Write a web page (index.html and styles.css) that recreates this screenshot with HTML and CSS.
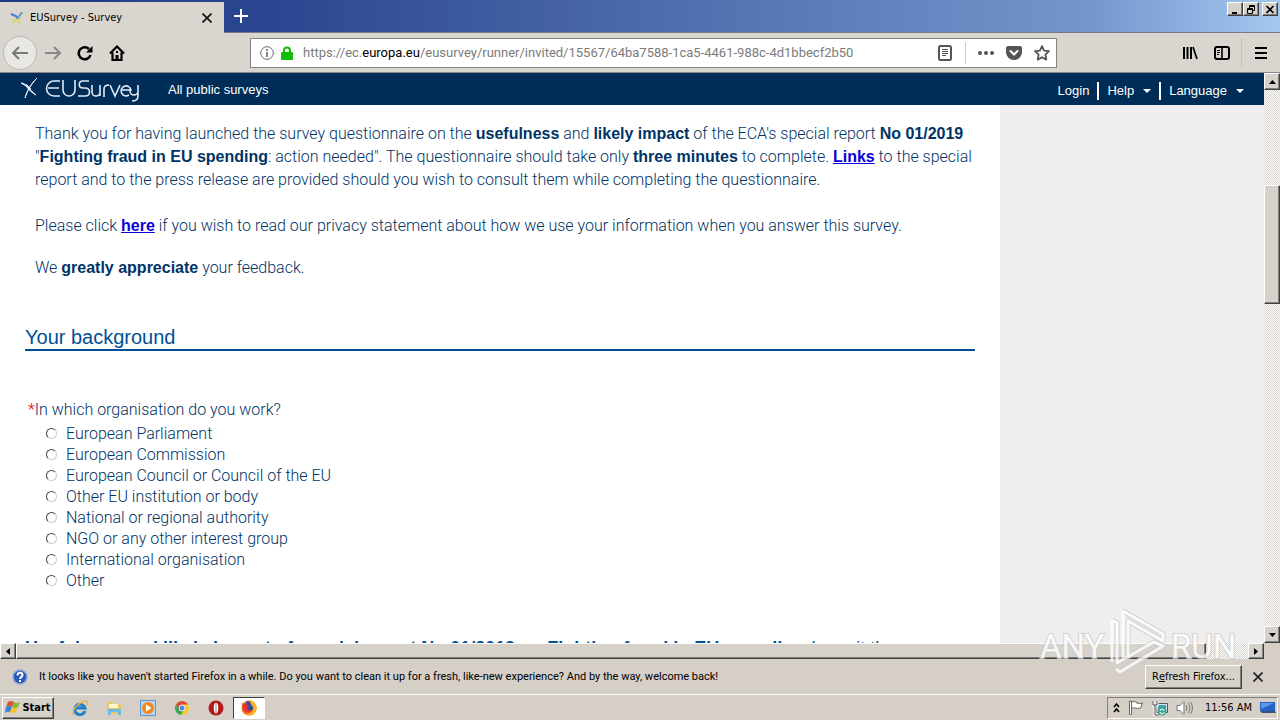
FILE: index.html
```html
<!DOCTYPE html>
<html lang="en">
<head>
  <meta charset="UTF-8">
  <title>EUSurvey - Survey</title>
  <link rel="stylesheet" href="styles.css">
</head>
<body>

<!-- TITLE BAR -->
<header class="titlebar">
  <div class="tab">
    <svg class="tab-icon" width="14" height="14" viewBox="0 0 14 14" fill="none">
      <path d="M1 3l5 2 2 3" stroke="#3f7fc4" stroke-width="2"/>
      <path d="M12 1C9 4 8 6 7 9" stroke="#5b9be0" stroke-width="1.5"/>
      <path d="M13 2C10 4 9 7 8 9" stroke="#79b05c"/>
      <path d="M6 8l-3 4M7 8l3 4" stroke="#e3d64c" stroke-width="2"/>
    </svg>
    <span class="tab-title">EUSurvey - Survey</span>
    <button class="icon-btn tab-close" aria-label="Close tab">
      <svg width="10" height="10" viewBox="0 0 10 10" stroke="#111" stroke-width="1.7"><path d="M.5.5l9 9M9.5.5l-9 9"/></svg>
    </button>
  </div>
  <button class="icon-btn new-tab" aria-label="New tab">
    <svg width="14" height="14" viewBox="0 0 14 14" stroke="#fff" stroke-width="2"><path d="M7 0v14M0 7h14"/></svg>
  </button>
  <div class="window-buttons">
    <button class="raised" aria-label="Minimize"><svg width="10" height="9" viewBox="0 0 10 9"><path d="M2 7h5v2H2z"/></svg></button>
    <button class="raised" aria-label="Restore"><svg width="10" height="9" viewBox="0 0 10 9" fill="none" stroke="#000"><path d="M3.5 3V.5h5v5H7M3 1.5h6M1.5 3.5h5v5h-5zM1 4.5h6"/></svg></button>
    <button class="raised close" aria-label="Close"><svg width="10" height="9" viewBox="0 0 10 9" stroke="#000" stroke-width="1.7"><path d="M1.5 1l7 7M8.5 1l-7 7"/></svg></button>
  </div>
</header>

<!-- TOOLBAR -->
<div class="toolbar">
  <button class="icon-btn back" aria-label="Back">
    <svg width="18" height="16" viewBox="0 0 18 16" fill="none" stroke="#777" stroke-width="2"><path d="M8 2L2 8l6 6M2 8h15"/></svg>
  </button>
  <button class="icon-btn nav-btn" aria-label="Forward">
    <svg width="18" height="16" viewBox="0 0 18 16" fill="none" stroke="#8b8985" stroke-width="2"><path d="M10 2l6 6-6 6M16 8H1"/></svg>
  </button>
  <button class="icon-btn nav-btn" aria-label="Reload">
    <svg width="16" height="16" viewBox="0 0 16 16" fill="none"><path d="M13.5 10A6 6 0 1 1 12 4" stroke="#000" stroke-width="2.5"/><path d="M15.5 1v6.5H9z" fill="#000"/></svg>
  </button>
  <button class="icon-btn nav-btn" aria-label="Home">
    <svg width="16" height="16" viewBox="0 0 16 16" fill="none"><path d="M1 8.5L8 1.5l7 7M3.5 7.5V15h9V7.5" stroke="#000" stroke-width="2.2"/><path d="M6.5 10h3v5h-3zM7 6h2v2H7z" fill="#000"/></svg>
  </button>
  <div class="urlbar">
    <svg width="14" height="14" viewBox="0 0 14 14" fill="none" stroke="#666"><circle cx="7" cy="7" r="6.3"/><path d="M7 6v5M7 3v2" stroke-width="1.6"/></svg>
    <svg class="lock" width="12" height="14" viewBox="0 0 12 14"><path d="M3 7V4.5a3 3 0 0 1 6 0V7" fill="none" stroke="#12bc00" stroke-width="2"/><rect y="6" width="12" height="8" rx="1" fill="#12bc00"/></svg>
    <div class="url">https://ec.<b>europa.eu</b>/eusurvey/runner/invited/15567/64ba7588-1ca5-4461-988c-4d1bbecf2b50</div>
    <svg width="14" height="16" viewBox="0 0 14 16" fill="none" stroke="#555"><rect x="1" y="1" width="12" height="14" rx="1.5" stroke-width="2"/><path d="M4 4.5h6M4 6.5h6M4 8.5h6M4 10.5h4"/></svg>
    <span class="url-sep"></span>
    <svg width="16" height="4" viewBox="0 0 16 4" fill="#555"><circle cx="2" cy="2" r="2"/><circle cx="8" cy="2" r="2"/><circle cx="14" cy="2" r="2"/></svg>
    <svg class="pocket" width="16" height="14" viewBox="0 0 16 14"><path d="M2 0h12a2 2 0 0 1 2 2v4a8 8 0 0 1-16 0V2a2 2 0 0 1 2-2z" fill="#555"/><path d="M4.5 5L8 8.5 11.5 5" fill="none" stroke="#fff" stroke-width="2" stroke-linecap="round"/></svg>
    <svg width="16" height="16" viewBox="0 0 16 16" fill="none" stroke="#555" stroke-width="1.8" stroke-linejoin="round"><path d="M8 1l2.1 4.6 4.9.6-3.6 3.4.9 5L8 12.2 3.7 14.6l.9-5L1 6.2l4.900-.6z"/></svg>
  </div>
  <button class="icon-btn library" aria-label="Library">
    <svg width="16" height="14" viewBox="0 0 16 14" fill="none" stroke="#000" stroke-width="2"><path d="M2 1v12M5.5 1v12M9 1v12"/><path d="M11 1l4 12" stroke-width="1.7"/></svg>
  </button>
  <button class="icon-btn sidebar" aria-label="Sidebars">
    <svg width="16" height="14" viewBox="0 0 16 14" fill="none" stroke="#000"><rect x="1" y="1" width="14" height="12" rx="2" stroke-width="2"/><path d="M8 1v12" stroke-width="1.6"/><path d="M3 4.5h3M3 6.5h3M3 8.5h2"/></svg>
  </button>
  <button class="icon-btn menu" aria-label="Menu">
    <svg width="12" height="12" viewBox="0 0 12 12" stroke="#000" stroke-width="2"><path d="M0 1h12M0 6h12M0 11h12"/></svg>
  </button>
</div>

<!-- PAGE -->
<div class="viewport">
  <div class="page">
    <nav class="navbar">
      <svg class="logo" width="120" height="26" viewBox="0 0 120 26" fill="none" stroke="#dfe9f5">
        <path d="M2 7c3 0 5 2 7 4s4 5 8 8c-4-2-8-6-10-9zM18 2C14 6 9 13 6 22c2-7 5-13 12-20z" fill="#dfe9f5"/>
        <path d="M7 8l5 5"/>
        <g stroke-width="1.6"><path d="M41 5h-6a7 7 0 0 0 0 15h6M29 12h11"/><path d="M44 4v10a6 6 0 0 0 12 0V4"/><path d="M70 5h-6c-5 0-5 7 0 7h2c6 0 6 8 0 8h-7"/><path d="M73 9v7a4 4 0 0 0 8 0V9M81 16v4"/><path d="M85 21v-8c0-3 2-4 5-4"/><path d="M91 9l5 11 5-11"/><path d="M103 14h9a5 5 0 1 0-2 5"/><path d="M111 13v2a4 4 0 0 0 8 0V9M119 15v5c0 4-3 5-6 5"/></g>
      </svg>
      <a class="surveys" href="#">All public surveys</a>
      <div class="nav-right">
        <a href="#">Login</a>
        <a class="drop" href="#">Help</a>
        <a class="drop" href="#">Language</a>
      </div>
    </nav>
    <main class="survey">
      <div class="intro">
        <p>Thank you for having launched the survey questionnaire on the <b>usefulness</b> and <b>likely impact</b> of the ECA's special report <b>No 01/2019</b><br>"<b>Fighting fraud in EU spending</b>: action needed". The questionnaire should take only <b>three minutes</b> to complete. <a href="#">Links</a> to the special<br>report and to the press release are provided should you wish to consult them while completing the questionnaire.</p>
        <p>Please click <a href="#">here</a> if you wish to read our privacy statement about how we use your information when you answer this survey.</p>
        <p class="thanks">We <b>greatly appreciate</b> your feedback.</p>
      </div>
      <h2>Your background</h2>
      <fieldset>
        <legend><span class="mandatory">*</span>In which organisation do you work?</legend>
        <label><input type="radio" name="org">European Parliament</label>
        <label><input type="radio" name="org">European Commission</label>
        <label><input type="radio" name="org">European Council or Council of the EU</label>
        <label><input type="radio" name="org">Other EU institution or body</label>
        <label><input type="radio" name="org">National or regional authority</label>
        <label><input type="radio" name="org">NGO or any other interest group</label>
        <label><input type="radio" name="org">International organisation</label>
        <label><input type="radio" name="org">Other</label>
      </fieldset>
      <h3>Usefulness and likely impact of special report No 01/2019 on Fighting fraud in EU spending <span>(permit the</span></h3>
    </main>
  </div>
  <div class="vscroll">
    <button class="raised" aria-label="Scroll up"><svg width="7" height="4" viewBox="0 0 7 4"><path d="M0 4l3.5-4L7 4z"/></svg></button>
    <div class="track"><div class="raised thumb"></div></div>
    <button class="raised" aria-label="Scroll down"><svg width="7" height="4" viewBox="0 0 7 4"><path d="M0 0l3.5 4L7 0z"/></svg></button>
  </div>
</div>
<div class="hscroll">
  <button class="raised" aria-label="Scroll left"><svg width="4" height="7" viewBox="0 0 4 7"><path d="M4 0L0 3.5 4 7z"/></svg></button>
  <div class="track"><div class="raised thumb"></div></div>
  <button class="raised" aria-label="Scroll right"><svg width="4" height="7" viewBox="0 0 4 7"><path d="M0 0l4 3.5L0 7z"/></svg></button>
</div>

<!-- NOTIFICATION -->
<div class="notification">
  <svg width="16" height="16" viewBox="0 0 16 16"><circle cx="8" cy="8" r="7" fill="#2859b8" stroke="#8fa9d8" stroke-width="1.5"/><path d="M5.5 6.5c0-4 5-3.5 5-.5 0 2-2.5 1.7-2.5 4M8 11v2" fill="none" stroke="#fff" stroke-width="2"/></svg>
  <p>It looks like you haven't started Firefox in a while. Do you want to clean it up for a fresh, like-new experience? And by the way, welcome back!</p>
  <button class="raised refresh">R<u>e</u>fresh Firefox...</button>
  <button class="icon-btn" aria-label="Dismiss"><svg width="10" height="10" viewBox="0 0 10 10" stroke="#222" stroke-width="1.7"><path d="M.5.5l9 9M9.5.5l-9 9"/></svg></button>
</div>

<!-- TASKBAR -->
<footer class="taskbar">
  <button class="raised start">
    <svg width="16" height="15" viewBox="0 0 16 15"><path d="M3 2q3-2 6 0L7 7Q4 5 1 7z" fill="#e5532d"/><path d="M9 2q3 2 6 0l-2 5q-3 2-6 0z" fill="#7dba3c"/><path d="M1 7q3-2 6 0l-2 5q-3-1-5 1z" fill="#3b80d8"/><path d="M7 7q3 2 6 0l-2 5q-3 2-6 0z" fill="#f5bf2c"/></svg>
    Start
  </button>
  <div class="quick">
    <button class="icon-btn" aria-label="Internet Explorer"><svg width="18" height="16" viewBox="0 0 18 16" fill="none"><path d="M14 11A5.2 5.2 0 1 1 14 8H5" stroke="#2080cf" stroke-width="3"/><path d="M3 15C-2 13 8 2 14 1c4 0 2 3 1 5" stroke="#e8b83a" stroke-width="1.3"/></svg></button>
    <button class="icon-btn" aria-label="Explorer"><svg width="16" height="16" viewBox="0 0 16 16"><path d="M1 2h6l1 2h7v10H1z" fill="#e9c965"/><path d="M3 4h9v4H3z" fill="#fff6cb"/><path d="M2 15V9h13v6h-3v-3H5v3z" fill="#72b9e3"/></svg></button>
    <button class="icon-btn" aria-label="Media Player"><svg width="16" height="16" viewBox="0 0 16 16"><path d="M.5.5h15v15H.5z" fill="#b6d5ef" stroke="#5a96cf"/><circle cx="8" cy="8" r="6" fill="#f08a1c"/><path d="M6 4.5L11.5 8 6 11.5z" fill="#fff"/></svg></button>
    <button class="icon-btn" aria-label="Chrome"><svg width="14" height="14" viewBox="0 0 14 14"><circle cx="7" cy="7" r="7" fill="#f7c92e"/><path d="M1 3.5A7 7 0 0 1 13 3.5H7L4 9z" fill="#df4a3c"/><path d="M1 3.5L4.5 9 8 10l-2 4A7 7 0 0 1 1 3.5z" fill="#3aa757"/><circle cx="7" cy="7" r="3.2" fill="#fff"/><circle cx="7" cy="7" r="2.5" fill="#4a87e8"/></svg></button>
    <button class="icon-btn" aria-label="Opera"><svg width="16" height="16" viewBox="0 0 16 16"><circle cx="8" cy="8" r="7.5" fill="#b3161b"/><ellipse cx="8" cy="8" rx="2.3" ry="5.5" fill="#fff"/><path d="M8 3v10" stroke="#b9b0ae" stroke-width="1.5"/></svg></button>
  </div>
  <button class="firefox" aria-label="Firefox"><svg width="16" height="16" viewBox="0 0 16 16"><circle cx="8" cy="8" r="7.5" fill="#f36b21"/><path d="M6 1a6.5 6.5 0 0 1 6 8q-2 3-5 2L4 6z" fill="#2f4ea0"/><path d="M9 0c7 2 9 9 4 14-3 2-7 2-9 0 5 1 9-3 8-7-1-2-3-3-3-7z" fill="#fcb327"/><path d="M1 3l3 1c2 0 3 1 4 2L6 8c1 3 4 2 5 2-2 4-8 3-9-1z" fill="#e5352c"/></svg></button>
  <div class="tray">
    <svg width="7" height="10" viewBox="0 0 7 10" fill="none" stroke="#000" stroke-width="1.5"><path d="M1 4l2.5-3L6 4M1 9l2.5-3L6 9"/></svg>
    <svg width="16" height="15" viewBox="0 0 16 15" fill="#fff" stroke="#666"><path d="M3.5 2q3-1 5 0v1q3 1 6 0l-2 5q-3 1-5 0l-4 0z"/><path d="M1.5 1v14h2V1z"/></svg>
    <svg width="16" height="16" viewBox="0 0 16 16"><path d="M4.5 3.5h11v9h-11z" fill="#c9e6ee" stroke="#555"/><path d="M6 5h8v6H6z" fill="#4c9bb8"/><path d="M1 1v4h4V1M3 5v10h4" fill="none" stroke="#fff" stroke-width="3"/><path d="M1 1v4h4V1M3 5v10h4" fill="none" stroke="#444"/><circle cx="10" cy="11" r="4.5" fill="#3ba58f"/><path d="M8 11a2 2 0 0 1 4 0M12 12a2 2 0 0 1-4 0" fill="none" stroke="#fff"/></svg>
    <svg width="17" height="14" viewBox="0 0 17 14" fill="#fff" stroke="#777"><path d="M1 4.5h3l4-4v13l-4-4H1z"/><path d="M10 4q2 3 0 6M12 2q4 5 0 10M14.5 1q4 6 0 12" fill="none"/></svg>
    <time>11:56 AM</time>
    <svg width="16" height="13" viewBox="0 0 16 13"><path d="M0 1h15v9H0z" fill="#2263c6"/><path d="M1 2h13L1 8z" fill="#5e98e6"/><path d="M0 10h15l1 2H2z" fill="#38537e"/></svg>
  </div>
</footer>

<!-- WATERMARK -->
<svg class="watermark" width="200" height="70" viewBox="0 0 200 70">
  <g fill="none" stroke="#ccc" stroke-width="5" stroke-linejoin="round"><path d="M85 3l40 23v7L90 13v36"/><path d="M74 12l5 3v40l37-21 9 4-43 26-4-3"/></g>
  <g fill="none" stroke="#fff" stroke-width="3" stroke-linejoin="round"><path d="M85 3l40 23v7L90 13v36M85 3v47"/><path d="M74 12l5 3v40l37-21 9 4-43 26-4-3M74 12v42"/></g>
  <text x="2" y="50">ANY</text>
  <text x="133" y="50">RUN</text>
</svg>

</body>
</html>
```
FILE: styles.css
```css
* { box-sizing: border-box; }
body {
  margin: 0;
  height: 100vh;
  display: flex;
  flex-direction: column;
  overflow: hidden;
  background: #d5cfc8;
  font-family: "DejaVu Sans Condensed", "DejaVu Sans", sans-serif;
  font-size: 11px;
  color: #000;
}
svg { display: block; flex: none; }
button { font: inherit; color: inherit; padding: 0; margin: 0; }
p { margin: 0; }
.icon-btn { background: none; border: none; display: flex; align-items: center; justify-content: center; }
.raised {
  display: flex;
  align-items: center;
  justify-content: center;
  background: #d6d2ca;
  border: 1px solid;
  border-color: #fff #404040 #404040 #fff;
  box-shadow: inset -1px -1px #808080;
}

/* title bar */
.titlebar {
  flex: none;
  height: 33px;
  display: flex;
  background: linear-gradient(90deg, #1d3a80 0%, #2b4791 22%, #5d7db9 65%, #7396cd 85%, #a3c8f0 100%);
  border-bottom: 1px solid #777c86;
}
.tab {
  width: 224px;
  height: 31px;
  margin-top: 2px;
  padding: 0 12px 0 10px;
  display: flex;
  align-items: center;
  background: #d9d6d0;
}
.tab-title { margin-left: 6px; flex: 1; }
.new-tab { width: 34px; }
.window-buttons { margin-left: auto; padding: 2px 2px 0 0; display: flex; align-items: flex-start; }
.window-buttons .raised { width: 16px; height: 14px; }
.window-buttons .close { margin-left: 3px; }

/* toolbar */
.toolbar {
  flex: none;
  height: 40px;
  display: flex;
  align-items: center;
  padding: 0 13px 0 3px;
  background: #d9d6d0;
  border-bottom: 1px solid #85878c;
}
.back { width: 34px; height: 34px; border-radius: 50%; background: #e9e7e3; border: 1px solid #bbb8b2; }
.nav-btn { width: 32px; height: 32px; }
.urlbar {
  flex: 1;
  max-width: 807px;
  height: 30px;
  margin: 0 auto 0 117px;
  padding: 0 6px 0 9px;
  display: flex;
  align-items: center;
  background: #fff;
  border: 1px solid #85837e;
}
.lock { margin: 0 10px 0 7px; }
.url { flex: 1; font-family: Roboto, sans-serif; font-size: 13px; color: #7b7b7b; white-space: nowrap; overflow: hidden; }
.url b { font-weight: normal; color: #000; }
.url-sep { width: 1px; height: 22px; margin: 0 12px 0 13px; background: #ccc; }
.pocket { margin: 0 12px; }
.library { margin-right: 16px; }
.sidebar { margin-right: 11px; }
.menu { height: 30px; padding-left: 13px; border-left: 1px solid #c5c2bc; }

/* page */
.viewport { flex: 1; min-height: 0; display: flex; }
.page {
  flex: 1;
  min-width: 0;
  overflow: hidden;
  background: #eee;
  font-family: "Liberation Sans", Arial, sans-serif;
}
.navbar {
  height: 32px;
  display: flex;
  align-items: center;
  padding: 0 20px 0 19px;
  background: #002d57;
  color: #fff;
  font-size: 13px;
}
.navbar a { color: #fff; text-decoration: none; }
.logo { margin-right: 29px; }
.nav-right { margin-left: auto; padding-top: 3px; display: flex; align-items: center; }
.nav-right a { line-height: 18px; padding-left: 8px; margin-left: 8px; }
.nav-right a + a { border-left: 2px solid #fff; }
.drop::after {
  content: "";
  display: inline-block;
  margin-left: 9px;
  border: 4px solid transparent;
  border-top-color: #fff;
  border-bottom: 0;
  vertical-align: middle;
}
.survey {
  width: 1000px;
  max-width: 100%;
  min-height: 100%;
  padding: 17px 25px 0;
  background: #fff;
  font-family: Roboto, Arial, sans-serif;
  font-size: 16px;
  font-weight: 300;
  color: #003366;
}
.intro { padding-left: 10px; line-height: 23px; white-space: nowrap; }
.intro p { margin-bottom: 23px; }
.intro .thanks { margin: -4px 0 0; }
.intro a, .intro b, h2, h3 { font-family: "Liberation Sans", Arial, sans-serif; }
.intro a, .intro b { font-weight: bold; }
.intro a { color: #0a00dc; }
h2 {
  margin: 46px 0 0;
  border-bottom: 2px solid #004f98;
  font-size: 20px;
  line-height: 24px;
  font-weight: normal;
  color: #004f98;
}
fieldset { margin: 47px 0 0; padding: 0; border: 0; }
legend { padding: 0 0 1px 3px; line-height: 24px; }
.mandatory { color: #e00; }
label { display: flex; align-items: center; height: 21px; padding-left: 21px; }
input[type=radio] {
  appearance: none;
  width: 11px;
  height: 11px;
  margin: 0 9px 0 0;
  border: 1px solid;
  border-color: #444 #ccc #ccc #444;
  border-radius: 50%;
}
h3 { margin: 45px 0 0; font-size: 18px; line-height: 24px; color: #004f98; white-space: nowrap; }
h3 span { font-weight: normal; }

/* scrollbars */
.track { flex: 1; background: repeating-conic-gradient(#fff 0 25%, #d6d2ca 0 50%) 0 0 / 2px 2px; }
.vscroll { width: 16px; display: flex; flex-direction: column; }
.vscroll .raised { height: 17px; width: 16px; }
.vscroll .track { padding-top: 95px; }
.vscroll .track .thumb { height: 119px; }
.hscroll { flex: none; height: 16px; padding-right: 16px; display: flex; }
.hscroll .raised { width: 16px; height: 16px; }
.hscroll .track { padding-right: 42px; }
.hscroll .track .thumb { width: 100%; }

/* notification */
.notification {
  flex: none;
  height: 36px;
  display: flex;
  align-items: center;
  padding: 0 17px 0 12px;
  border-bottom: 1px solid #fff;
}
.notification p { flex: 1; margin-left: 11px; font-family: Roboto, sans-serif; white-space: nowrap; }
.refresh { width: 97px; height: 24px; margin-right: 11px; white-space: pre; }

/* taskbar */
.taskbar { flex: none; height: 25px; display: flex; align-items: center; padding: 0 2px; }
.start { width: 52px; height: 22px; font-weight: bold; gap: 1px; }
.quick { display: flex; margin-left: 9px; }
.quick .icon-btn { width: 34px; }
.firefox {
  width: 32px;
  height: 22px;
  display: flex;
  align-items: center;
  justify-content: center;
  background: #fff;
  border: 1px solid;
  border-color: #404040 #fff #fff #404040;
}
.tray {
  margin-left: auto;
  height: 22px;
  padding: 0 1px 0 5px;
  display: flex;
  align-items: center;
  gap: 8px;
  border: 1px solid;
  border-color: #808080 #fff #fff #808080;
}
.tray time { margin-left: 4px; }

.watermark { position: absolute; right: 42px; bottom: 42px; opacity: 0.8; pointer-events: none; }
.watermark text {
  font: 33px Roboto, sans-serif;
  fill: #fff;
  stroke: #ccc;
  stroke-width: 2px;
  paint-order: stroke;
}
```
